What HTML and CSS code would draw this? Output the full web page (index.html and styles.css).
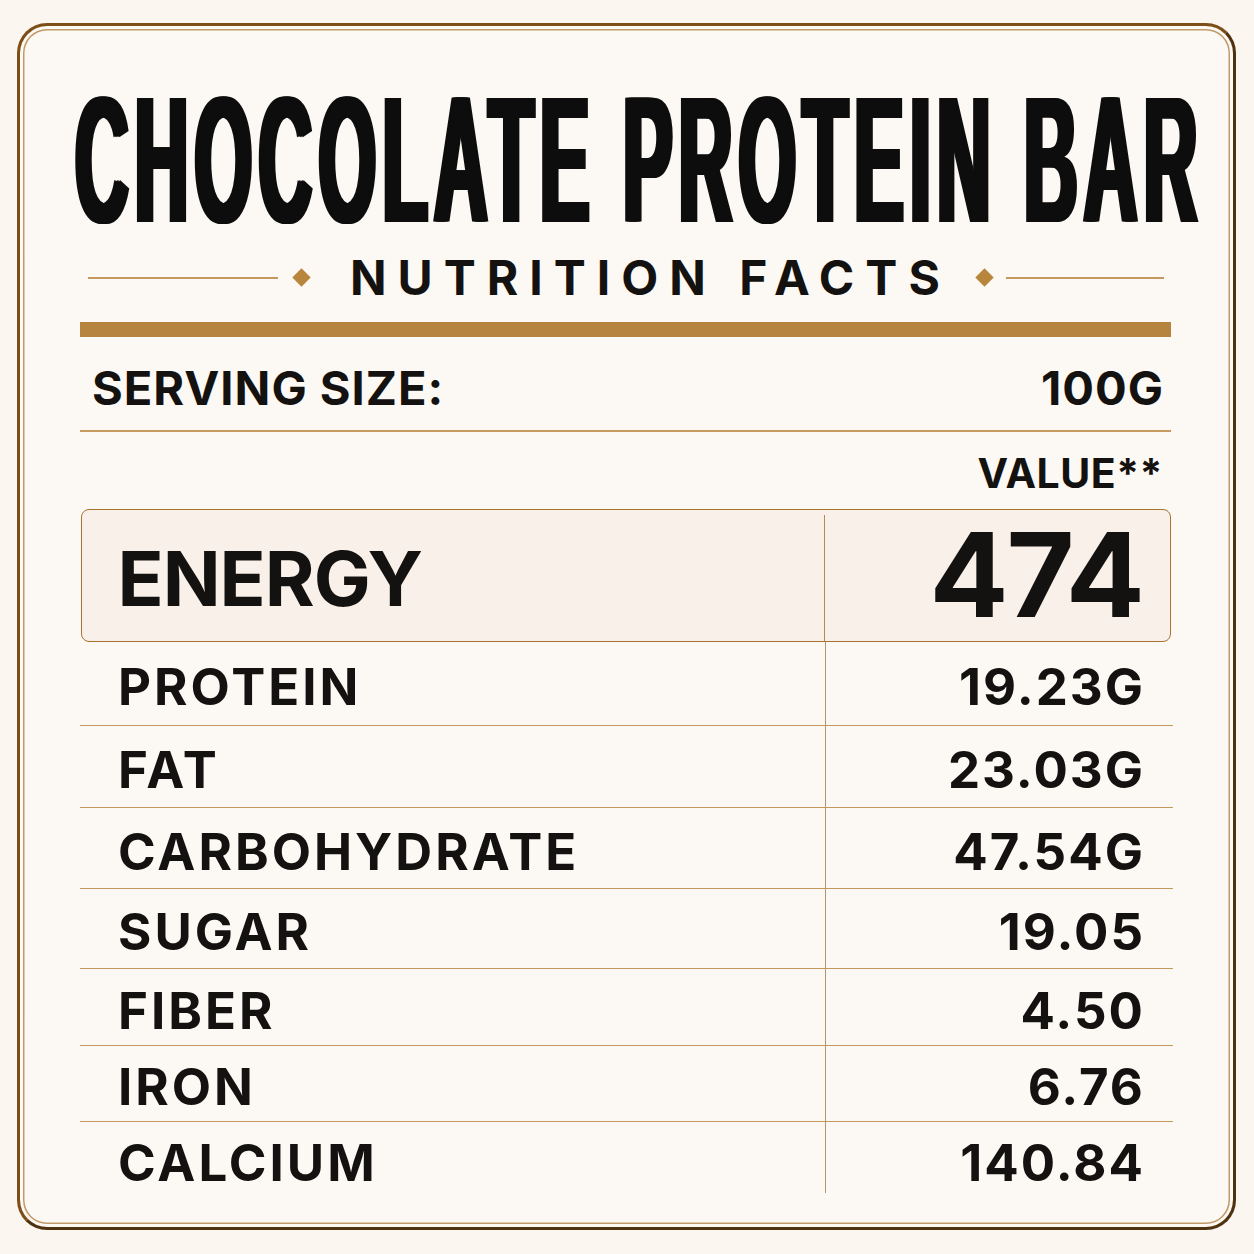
FILE: index.html
```html
<!DOCTYPE html>
<html lang="en">
<head>
<meta charset="utf-8">
<title>Chocolate Protein Bar – Nutrition Facts</title>
<link rel="stylesheet" href="styles.css">
</head>
<body>
<main class="card">
  <h1 class="title"><span class="title-text">CHOCOLATE PROTEIN BAR</span></h1>
  <div class="subtitle">
    <span class="rule rule-left"></span>
    <span class="diamond"></span>
    <span class="subtitle-text">NUTRITION FACTS</span>
    <span class="diamond diamond-right"></span>
    <span class="rule rule-right"></span>
  </div>
  <div class="gold-bar"></div>
  <div class="serving">
    <span>SERVING SIZE:</span>
    <span>100G</span>
  </div>
  <div class="value-head">VALUE**</div>
  <div class="energy">
    <div class="energy-label">ENERGY</div>
    <div class="energy-value">474</div>
  </div>
  <div class="rows">
    <div class="row row-protein"><div class="label">PROTEIN</div><div class="value">19.23G</div></div>
    <div class="row row-fat"><div class="label">FAT</div><div class="value">23.03G</div></div>
    <div class="row row-carb"><div class="label">CARBOHYDRATE</div><div class="value">47.54G</div></div>
    <div class="row row-sugar"><div class="label">SUGAR</div><div class="value">19.05</div></div>
    <div class="row row-fiber"><div class="label">FIBER</div><div class="value">4.50</div></div>
    <div class="row row-iron"><div class="label">IRON</div><div class="value">6.76</div></div>
    <div class="row row-calcium"><div class="label">CALCIUM</div><div class="value">140.84</div></div>
  </div>
</main>
</body>
</html>
```

FILE: styles.css
```css
* { box-sizing: border-box; }

html, body {
  margin: 0;
  padding: 0;
  background: #fbf6f0;
}

body {
  overflow: hidden;
  font-family: "Inter", "Open Sans", "Liberation Sans", sans-serif;
  color: #141210;
}

.card {
  margin: 23px 0 0 17px;
  width: 1219px;
  height: 1207px;
  border: 3px solid;
  border-color: #7d4e17 #4f3210 #4f3210 #7d4e17;
  border-radius: 30px;
  background: #fcf8f3;
  box-shadow: inset 0 0 0 3px #fcf8f3, inset 0 0 0 4.5px #c29a6a;
  padding: 42px 62px 0 60px;
  overflow: hidden;
}

/* Title */
.title {
  margin: 0;
  height: 183px;
  padding-left: 11px;
  display: flex;
  justify-content: center;
  align-items: center;
}

.title-text {
  display: inline-block;
  white-space: nowrap;
  font-family: "Liberation Sans", Arial, sans-serif;
  font-weight: 700;
  font-size: 180px;
  line-height: 140px;
  letter-spacing: 16px;
  margin-right: -16px;
  color: #0d0d0d;
  transform: scaleX(0.41);
  text-shadow: 7px 0 0 #0d0d0d, -7px 0 0 #0d0d0d, 3.5px 0 0 #0d0d0d, -3.5px 0 0 #0d0d0d;
}

/* Subtitle */
.subtitle {
  height: 53px;
  display: flex;
  align-items: center;
  padding-left: 8px;
}

.rule {
  height: 2px;
  background: #c4985e;
}

.rule-left { width: 190px; }
.rule-right { width: 158px; margin-left: 15px; }

.diamond {
  width: 13px;
  height: 13px;
  background: #b8853d;
  transform: rotate(45deg);
  margin-left: 17px;
}

.diamond-right { margin-left: 38px; }

.subtitle-text {
  margin-left: 42px;
  font-size: 48px;
  line-height: 36px;
  font-weight: 700;
  letter-spacing: 11px;
  margin-right: -11px;
  white-space: nowrap;
}

.gold-bar {
  margin-top: 18px;
  height: 15px;
  background: #b6843e;
}

/* Serving */
.serving {
  height: 95px;
  padding: 7px 7px 0 12px;
  display: flex;
  justify-content: space-between;
  align-items: center;
  border-bottom: 2px solid #c89a5f;
  font-size: 47px;
  font-weight: 700;
  letter-spacing: 1px;
}

.value-head {
  height: 77px;
  padding: 5px 8px 0 0;
  display: flex;
  justify-content: flex-end;
  align-items: center;
  font-size: 41px;
  font-weight: 700;
  letter-spacing: 0.5px;
}

/* Energy box */
.energy {
  margin-left: 1px;
  height: 133px;
  display: grid;
  grid-template-columns: 743px 1fr;
  grid-template-rows: 1fr;
  border: 1.5px solid #a8732f;
  border-radius: 8px;
  background: #f9f1e9;
}

.energy-label {
  margin-top: 5px;
  padding: 0 0 1px 35.5px;
  border-right: 1.5px solid #b08a5a;
  display: flex;
  align-items: center;
  font-size: 76px;
  line-height: 1;
  font-weight: 700;
  letter-spacing: -1px;
}

.energy-value {
  display: flex;
  justify-content: flex-end;
  align-items: center;
  padding: 0 27px 2px 0;
  font-size: 117px;
  line-height: 1;
  font-weight: 700;
  letter-spacing: -2px;
}

/* Rows */
.row {
  height: 80px;
  padding-top: 6px;
  display: grid;
  grid-template-columns: 746px 1fr;
  border-bottom: 1.5px solid #c4975c;
  width: 1093px;
  font-size: 51px;
  font-weight: 700;
}

.row-protein { height: 84px; }
.row-fat { height: 82px; }
.row-carb { height: 81px; }
.row-sugar { height: 80px; }
.row-fiber { height: 77px; }
.row-iron { height: 76px; }

.row-calcium {
  height: 69px;
  padding-top: 10px;
  border-bottom: none;
}

.label {
  display: flex;
  align-items: center;
  padding-left: 38px;
  border-right: 1.5px solid #b99467;
  letter-spacing: 3px;
  margin-top: -6px;
  padding-top: 6px;
}

.row-calcium .label {
  margin-top: -10px;
  padding-top: 10px;
}

.value {
  display: flex;
  justify-content: flex-end;
  align-items: center;
  padding-right: 28px;
  letter-spacing: 2px;
}
```
